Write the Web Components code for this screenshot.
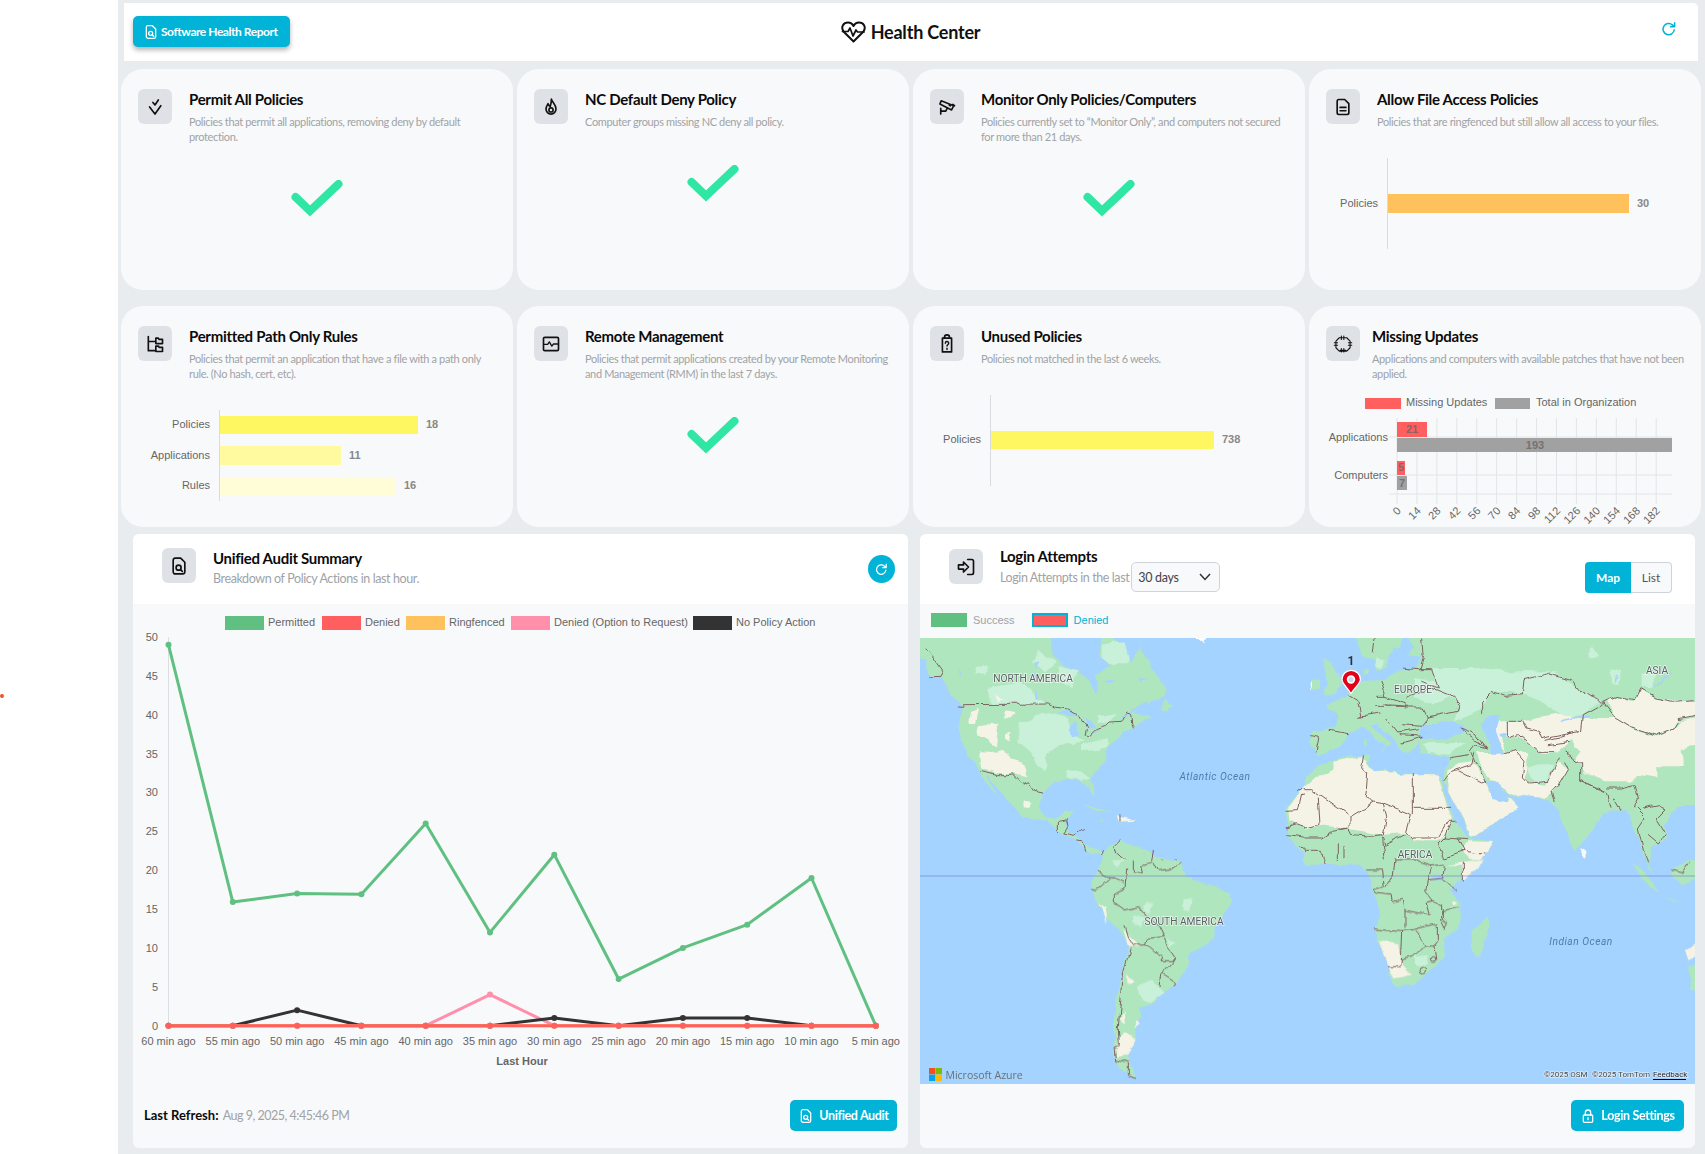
<!DOCTYPE html>
<html lang="en">
<head>
<meta charset="utf-8">
<title>Health Center</title>
<style>
  html, body { margin: 0; padding: 0; background: #fff; }
  body { font-family: "Lato", "Liberation Sans", sans-serif; }
  health-page { --ui: "Lato", "Liberation Sans", sans-serif; --chart: "Liberation Sans", Arial, sans-serif; --cyan: #00b3d7; }
</style>
</head>
<body>
<health-page>
  <top-bar></top-bar>
  <div slot="cards" style="display:contents">
    <status-card slot="cards" heading="Permit All Policies" desc="Policies that permit all applications, removing deny by default protection." icon="checks"><check-mark></check-mark></status-card>
    <status-card slot="cards" heading="NC Default Deny Policy" desc="Computer groups missing NC deny all policy." icon="flame"><check-mark></check-mark></status-card>
    <status-card slot="cards" heading="Monitor Only Policies/Computers" desc="Policies currently set to “Monitor Only”, and computers not secured for more than 21 days." icon="cctv"><check-mark></check-mark></status-card>
    <status-card slot="cards" heading="Allow File Access Policies" desc="Policies that are ringfenced but still allow all access to your files." icon="file"><hbar-chart axis="79" rows='[["Policies",241,36,19,"#ffc15c","30"]]'></hbar-chart></status-card>
    <status-card slot="cards" heading="Permitted Path Only Rules" desc="Policies that permit an application that have a file with a path only rule. (No hash, cert, etc)." icon="tree"><hbar-chart axis="99" rows='[["Policies",198,6,18,"#fff761","18"],["Applications",121,36,19,"#fffaa0","11"],["Rules",176,67,18,"#fffcd8","16"]]'></hbar-chart></status-card>
    <status-card slot="cards" heading="Remote Management" desc="Policies that permit applications created by your Remote Monitoring and Management (RMM) in the last 7 days." icon="monitor"><check-mark></check-mark></status-card>
    <status-card slot="cards" heading="Unused Policies" desc="Policies not matched in the last 6 weeks." icon="clipboard"><hbar-chart axis="78" rows='[["Policies",223,36,18,"#fff761","738"]]'></hbar-chart></status-card>
    <status-card slot="cards" heading="Missing Updates" desc="Applications and computers with available patches that have not been applied." icon="patch" gap="12"><updates-chart></updates-chart></status-card>
  </div>
  <panel-box slot="panels" heading="Unified Audit Summary" icon="filesearch">
    <span slot="sub">Breakdown of Policy Actions in last hour.</span>
    <round-refresh slot="action"></round-refresh>
    <audit-chart></audit-chart>
    <refresh-note slot="foot-left"></refresh-note>
    <cta-button slot="foot-right" icon="filesearch" width="107">Unified Audit</cta-button>
  </panel-box>
  <panel-box slot="panels" heading="Login Attempts" icon="login" tight>
    <span slot="sub">Login Attempts in the last</span>
    <days-select slot="sub"></days-select>
    <map-toggle slot="action"></map-toggle>
    <login-legend></login-legend>
    <world-map></world-map>
    <cta-button slot="foot-right" icon="lock" width="113">Login Settings</cta-button>
  </panel-box>
</health-page>

<script>
const ICONS = {
  checks: '<path d="M9.5 6.5l2.500 3 4-6M5.500 12l6.500 8.500 7-10"/>',
  flame: '<path d="M12.500 2.500c.5 3.500 5.500 6 5.500 12a6 6 0 0 1-12 0c0-3 1.500-4.500 2.500-6.500.5 1.500 1 2.500 2.500 3.500 1-2.500 1.500-5.500 1.500-9z"/><circle cx="12" cy="15.500" r="2.500"/>',
  cctv: '<path d="M5 4.500l15 6-2.500 5-14-7zM12.500 13l-2 4H5.500M4.500 13.500v7M19 9l2 1.500M14.500 9.500l1.500 1"/>',
  file: '<path d="M7 3h7l5 5v11a2 2 0 0 1-2 2H7a2 2 0 0 1-2-2V5a2 2 0 0 1 2-2zM8.500 12.500h7M8.500 16.500h7"/>',
  tree: '<path d="M4 3v17h8M4 9h8M13 5h3l1 1.500h4v5h-8zM13 14.500h3l1 1.500h4v5h-8z"/>',
  monitor: '<rect x="3" y="4" width="18" height="16" rx="1.500"/><path d="M4 12.500h4l2-3 3 5 2-2.500h5" stroke-width="1.600"/>',
  clipboard: '<path d="M9 5h6v-1a3 3 0 0 0-6 0zM9 5H6.500v16.500h11V5H15"/><path d="M10 11a2 2 0 1 1 3 1.700c-.8.5-1 1-1 1.800M12 17v1.500" stroke-width="1.700"/>',
  patch: '<path d="M7.500 4.500h9l4 4v8l-4 4h-9l-4-4v-8zM10 2.500v4M13 2.500v4M15.500 4.500h-7M10 17.500v4M13 17.500v4M15.500 19.500h-7M1.500 10.500h4M1.500 13.500h4M3.500 9v6M18.500 10.500h4M18.500 13.500h4M20.500 9v6" stroke-width="1.300"/>',
  filesearch: '<path d="M7 2.500h7l5 5V19a2.500 2.500 0 0 1-2.500 2.500h-9A2.500 2.500 0 0 1 5 19V5a2.500 2.500 0 0 1 2-2.500z"/><circle cx="11.500" cy="14" r="3"/><path d="M13.800 16.300l2.200 2.200"/>',
  login: '<path d="M14 3h5a2 2 0 0 1 2 2v14a2 2 0 0 1-2 2h-5"/><path d="M3 9.500h6V6l6 6-6 6v-3.500H3z"/>',
  lock: '<rect x="5" y="10.500" width="14" height="11" rx="1.500"/><path d="M8 10.500V7a4 4 0 0 1 8 0v3.500M12 14.500v3"/>',
  refresh: '<path d="M19 13a7.500 7.500 0 1 1-2.500-6.500L19 9M19.500 3.500V9H14"/>'
};
const svgIcon = (name, size, stroke) =>
  `<svg width="${size}" height="${size}" viewBox="0 0 24 24" fill="none" stroke="${stroke}" stroke-width="2" stroke-linecap="round" stroke-linejoin="round" style="display:block;flex:none">${ICONS[name]}</svg>`;

class HealthPage extends HTMLElement {
  constructor() {
    super();
    this.attachShadow({ mode: "open" }).innerHTML = `
      <style>
        :host { display: grid; grid-template-columns: 118px 1fr; height: 1154px; overflow: hidden; font-family: var(--ui); }
        .side { background: #fff; padding-top: 694px; }
        .dot { width: 4px; height: 4px; border-radius: 50%; background: #f0532a; }
        main { background: #e9ecef; padding-top: 3px; min-width: 0; }
        .cards { display: grid; grid-template-columns: repeat(4, 392px); gap: 16px 4px; margin: 8px 0 0 3px; }
        .panels { display: grid; grid-template-columns: 775px 775px; gap: 12px; margin: 7px 0 0 15px; }
        ::slotted(top-bar) { margin: 0 7px 0 6px; }
      </style>
      <div class="side"><div class="dot"></div></div>
      <main>
        <slot></slot>
        <div class="cards"><slot name="cards"></slot></div>
        <div class="panels"><slot name="panels"></slot></div>
      </main>`;
  }
}

class TopBar extends HTMLElement {
  constructor() {
    super();
    this.attachShadow({ mode: "open" }).innerHTML = `
      <style>
        :host { display: grid; grid-template-columns: 1fr auto 1fr; align-items: center; height: 58px; background: #fff; border-radius: 0 5px 0 0; padding: 0 20px 0 9px; font-family: var(--ui); }
        .report { display: inline-flex; align-items: center; gap: 2px; justify-self: start; height: 31px; width: 157px; box-sizing: border-box; padding-left: 10px; background: var(--cyan); color: #fff; border-radius: 5px; font-size: 12px; font-weight: 700; letter-spacing: -.45px; box-shadow: 0 3px 5px rgba(0,0,0,.3); margin-top: -1px; }
        h1 { display: flex; align-items: center; gap: 5px; margin: 0 0 0 10px; font-size: 18px; font-weight: 700; letter-spacing: -.2px; color: #111; }
        .re { justify-self: end; margin-top: -7px; }
      </style>
      <div class="report">${svgIcon("filesearch", 16, "#fff")}Software Health Report</div>
      <h1><svg width="25" height="22" viewBox="0 0 25 22" fill="none" stroke="#111" stroke-width="2" stroke-linejoin="round" stroke-linecap="round"><path d="M12.500 20.500L2.500 10.500C-.5 6 2.500 1.500 7 1.500c2.500 0 4.500 1.500 5.500 3.500 1-2 3-3.500 5.500-3.500 4.500 0 7.500 4.500 4.500 9z"/><path d="M1.500 10.500H7l2-3.500 3 8 3-6 1.500 2H23" stroke-width="1.700"/></svg>Health Center</h1>
      <div class="re">${svgIcon("refresh", 18, "#00b3d7")}</div>`;
  }
}

class StatusCard extends HTMLElement {
  constructor() {
    super();
    const gap = this.getAttribute("gap") || 17;
    this.attachShadow({ mode: "open" }).innerHTML = `
      <style>
        :host { display: block; height: 221px; background: #f8f9fa; border-radius: 22px; overflow: hidden; font-family: var(--ui); }
        .head { display: flex; gap: ${gap}px; padding: 20px 14px 0 17px; min-height: 40px; }
        .tile { flex: none; width: 34px; height: 35px; border-radius: 6px; background: #dee2e6; display: flex; align-items: center; justify-content: center; }
        h3 { margin: 0; font-size: 15px; line-height: 20px; font-weight: 700; letter-spacing: -.3px; color: #0b0b0b; }
        p { margin: 5px 0 0; font-size: 11px; line-height: 15px; letter-spacing: -.36px; color: #a0a3a6; }
      </style>
      <div class="head">
        <div class="tile">${svgIcon(this.getAttribute("icon"), 20, "#111")}</div>
        <div><h3>${this.getAttribute("heading")}</h3><p>${this.getAttribute("desc")}</p></div>
      </div>
      <slot></slot>`;
  }
}

class CheckMark extends HTMLElement {
  constructor() {
    super();
    this.attachShadow({ mode: "open" }).innerHTML = `
      <style>:host { display: flex; justify-content: center; margin-top: 36px; }</style>
      <svg width="52" height="37" viewBox="0 0 52 37" fill="none" stroke="#2fe6a5" stroke-width="8" stroke-linecap="round" stroke-linejoin="miter"><path d="M4.500 17L19 31 47.500 4"/></svg>`;
  }
}

class HbarChart extends HTMLElement {
  constructor() {
    super();
    const ax = +this.getAttribute("axis");
    const rows = JSON.parse(this.getAttribute("rows"));
    const bars = rows.map(([label, w, y, h, color, val]) => `
      <text x="${ax - 10}" y="${y + h / 2 + 3}" text-anchor="end" fill="#666">${label}</text>
      <rect x="${ax}" y="${y}" width="${w}" height="${h}" fill="${color}"/>
      <text x="${ax + w + 8}" y="${y + h / 2 + 3}" fill="#888" font-weight="700">${val}</text>`).join("");
    this.attachShadow({ mode: "open" }).innerHTML = `
      <style>:host { display: block; margin-top: 29px; } svg { display: block; font: 11px var(--chart); }</style>
      <svg width="392" height="100"><line x1="${ax - .5}" x2="${ax - .5}" y1="0" y2="91" stroke="#d9dcdf"/>${bars}</svg>`;
  }
}

class UpdatesChart extends HTMLElement {
  constructor() {
    super();
    const x0 = 88, unit = 1.424, y = v => v - 381;
    let grid = "", ticks = "";
    for (let v = 0; v <= 182; v += 14) {
      const x = x0 + v * unit;
      grid += `<line x1="${x}" x2="${x}" y1="${y(418)}" y2="${y(504)}" stroke="#e2e4e7"/>`;
      ticks += `<text transform="translate(${x + 1} ${y(508)}) rotate(-45)" text-anchor="end" dy="5" fill="#666">${v}</text>`;
    }
    const hl = [437, 475, 494].map(v => `<line x1="${x0 - 8}" x2="363" y1="${y(v)}" y2="${y(v)}" stroke="#e2e4e7"/>`).join("");
    this.attachShadow({ mode: "open" }).innerHTML = `
      <style>:host { display: block; } svg { display: block; font: 11px var(--chart); }</style>
      <svg width="392" height="146">
        <rect x="56" y="17" width="36" height="11" fill="#ff5f5f"/><text x="97" y="25" fill="#666">Missing Updates</text>
        <rect x="186" y="17" width="35" height="11" fill="#a1a1a1"/><text x="227" y="25" fill="#666">Total in Organization</text>
        ${grid}${hl}
        <rect x="${x0}" y="${y(422)}" width="30" height="15" fill="#ff5f5f"/>
        <rect x="${x0}" y="${y(438)}" width="275" height="14" fill="#a1a1a1"/>
        <rect x="${x0}" y="${y(461)}" width="8" height="14" fill="#ff5f5f"/>
        <rect x="${x0}" y="${y(476)}" width="10" height="14" fill="#a1a1a1"/>
        <g fill="#666" font-weight="700" fill-opacity=".8" text-anchor="middle">
          <text x="103" y="${y(433)}">21</text><text x="226" y="${y(449)}">193</text><text x="92" y="${y(471)}">5</text><text x="93" y="${y(487)}">7</text>
        </g>
        <text x="79" y="${y(440.5)}" text-anchor="end" fill="#666">Applications</text>
        <text x="79" y="${y(478.5)}" text-anchor="end" fill="#666">Computers</text>
        ${ticks}
      </svg>`;
  }
}

class PanelBox extends HTMLElement {
  constructor() {
    super();
    const tight = this.hasAttribute("tight");
    this.attachShadow({ mode: "open" }).innerHTML = `
      <style>
        :host { display: flex; flex-direction: column; height: 614px; background: #f8f9fa; border-radius: 6px; overflow: hidden; font-family: var(--ui); }
        header { flex: none; display: flex; align-items: flex-start; height: 70px; box-sizing: border-box; background: #fff; padding: ${tight ? "15px 23px 0 29px" : "14px 13px 0 29px"}; }
        .tile { flex: none; width: 34px; height: 35px; border-radius: 6px; background: #dee2e6; display: flex; align-items: center; justify-content: center; }
        .txt { flex: 1; margin-left: 17px; margin-top: ${tight ? "-3px" : "0"}; }
        h3 { margin: 0; font-size: 15px; line-height: 20px; font-weight: 700; letter-spacing: -.3px; color: #0b0b0b; }
        .sub { display: flex; align-items: center; font-size: 12.5px; letter-spacing: -.4px; color: #a0a3a6; margin-top: ${tight ? "-4px" : "3px"}; min-height: ${tight ? "30px" : "0"}; gap: 2px; }
        .body { flex: 1; min-height: 0; }
        footer { flex: none; height: 64px; box-sizing: border-box; padding: 16px 11px 0; display: flex; justify-content: space-between; align-items: flex-start; }
      </style>
      <header>
        <div class="tile">${svgIcon(this.getAttribute("icon"), 20, "#111")}</div>
        <div class="txt"><h3>${this.getAttribute("heading")}</h3><div class="sub"><slot name="sub"></slot></div></div>
        <slot name="action"></slot>
      </header>
      <div class="body"><slot></slot></div>
      <footer><div><slot name="foot-left"></slot></div><slot name="foot-right"></slot></footer>`;
  }
}

class RoundRefresh extends HTMLElement {
  constructor() {
    super();
    this.attachShadow({ mode: "open" }).innerHTML = `
      <style>:host { display: flex; align-items: center; justify-content: center; width: 27px; height: 28px; border-radius: 50%; background: var(--cyan); margin-top: 7px; }</style>
      ${svgIcon("refresh", 15, "#fff")}`;
  }
}

class RefreshNote extends HTMLElement {
  constructor() {
    super();
    this.attachShadow({ mode: "open" }).innerHTML = `
      <style>
        :host { display: block; line-height: 31px; font-size: 12.5px; color: #a0a3a6; font-family: var(--ui); letter-spacing: -.5px; }
        b { color: #0b0b0b; font-size: 13px; letter-spacing: 0; margin-right: 2px; }
      </style>
      <b>Last Refresh:</b> Aug 9, 2025, 4:45:46 PM`;
  }
}

class CtaButton extends HTMLElement {
  constructor() {
    super();
    this.attachShadow({ mode: "open" }).innerHTML = `
      <style>
        :host { display: flex; align-items: center; justify-content: center; gap: 5px; box-sizing: border-box; width: ${this.getAttribute("width")}px; height: 31px; border-radius: 5px; background: var(--cyan); color: #fff; font: 700 12.5px var(--ui); letter-spacing: -.35px; }
      </style>
      ${svgIcon(this.getAttribute("icon"), 16, "#fff")}<slot></slot>`;
  }
}

class DaysSelect extends HTMLElement {
  constructor() {
    super();
    this.attachShadow({ mode: "open" }).innerHTML = `
      <style>
        :host { display: flex; align-items: center; justify-content: space-between; box-sizing: border-box; width: 89px; height: 30px; padding: 0 8px 0 6px; background: #f8f9fa; border: 1px solid #ced4da; border-radius: 5px; color: #444; font-size: 12.5px; letter-spacing: -.3px; }
      </style>
      <span>30 days</span>
      <svg width="12" height="8" viewBox="0 0 12 8" fill="none" stroke="#333" stroke-width="1.5"><path d="M1 1l5 5.500L11 1"/></svg>`;
  }
}

class MapToggle extends HTMLElement {
  constructor() {
    super();
    this.attachShadow({ mode: "open" }).innerHTML = `
      <style>
        :host { display: flex; height: 31px; margin-top: 13px; font: 700 12px var(--ui); }
        div { display: flex; align-items: center; justify-content: center; box-sizing: border-box; }
        .on { width: 46px; background: var(--cyan); color: #fff; border-radius: 4px 0 0 4px; }
        .off { width: 41px; background: #f8f9fa; color: #555; border: 1px solid #ced4da; border-left: 0; border-radius: 0 4px 4px 0; font-weight: 400; }
      </style>
      <div class="on">Map</div><div class="off">List</div>`;
  }
}

class LoginLegend extends HTMLElement {
  constructor() {
    super();
    this.attachShadow({ mode: "open" }).innerHTML = `
      <style>
        :host { display: flex; align-items: center; height: 34px; padding: 0 0 3px 11px; box-sizing: border-box; font: 11px var(--chart); color: #a0a3a6; }
        i { display: block; width: 36px; height: 14px; box-sizing: border-box; margin-right: 6px; }
        .g { background: #5fc082; }
        .r { background: #ff5f5f; border: 2px solid var(--cyan); margin-left: 17px; }
        .d { color: var(--cyan); }
      </style>
      <i class="g"></i><span>Success</span><i class="r"></i><span class="d">Denied</span>`;
  }
}

class AuditChart extends HTMLElement {
  constructor() {
    super();
    const X = i => 35.5 + 64.3 * i, Y = v => 421.7 - 7.774 * v;
    const series = [
      ["#5fc082", [49, 15.9, 17, 16.9, 26, 12, 22, 6, 10, 13, 19, 0]],
      ["#ff8fab", [0, 0, 0, 0, 0, 4, 0, 0, 0, 0, 0, 0]],
      ["#333333", [0, 0, 2, 0, 0, 0, 1, 0, 1, 1, 0, 0]],
      ["#ffc15c", [0, 0, 0, 0, 0, 0, 0, 0, 0, 0, 0, 0]],
      ["#ff5f5f", [0, 0, 0, 0, 0, 0, 0, 0, 0, 0, 0, 0]]
    ];
    const lines = series.map(([c, d]) => {
      const pts = d.map((v, i) => `${X(i)},${Y(v)}`).join(" ");
      const dots = d.map((v, i) => `<circle cx="${X(i)}" cy="${Y(v)}" r="3" fill="${c}"/>`).join("");
      return `<polyline points="${pts}" fill="none" stroke="${c}" stroke-width="3" stroke-linejoin="round"/>${dots}`;
    }).join("");
    let yl = "", xl = "";
    for (let v = 0; v <= 50; v += 5) yl += `<text x="25" y="${Y(v) + 4}" text-anchor="end">${v}</text>`;
    for (let i = 0; i < 12; i++) xl += `<text x="${X(i)}" y="441" text-anchor="middle">${60 - i * 5} min ago</text>`;
    const legend = [[92, "#5fc082", "Permitted"], [189, "#ff5f5f", "Denied"], [273, "#ffc15c", "Ringfenced"], [378, "#ff8fab", "Denied (Option to Request)"], [560, "#333", "No Policy Action"]]
      .map(([x, c, t]) => `<rect x="${x}" y="12" width="39" height="14" fill="${c}"/><text x="${x + 43}" y="22">${t}</text>`).join("");
    this.attachShadow({ mode: "open" }).innerHTML = `
      <style>:host { display: block; } svg { display: block; font: 11px var(--chart); fill: #666; }</style>
      <svg width="775" height="480">
        ${legend}
        <line x1="35.5" x2="35.5" y1="33" y2="422" stroke="#dcdfe2"/>
        ${yl}${xl}${lines}
        <text x="389" y="461" text-anchor="middle" font-weight="700">Last Hour</text>
      </svg>`;
  }
}

class WorldMap extends HTMLElement {
  constructor() {
    super();
    this.attachShadow({ mode: "open" }).innerHTML = `
      <style>
        :host { display: block; height: 446px; background: #a5d3ff; }
        svg { display: block; }
        .land { fill: #b0e6bd; }
        .pale { fill: #c9f0d8; }
        .dry { fill: #f5f2e6; }
        .sea { fill: #a5d3ff; }
        .riv { fill: none; stroke: #a5d3ff; stroke-width: 5; stroke-linecap: round; }
        .ln { fill: none; stroke: #7d6062; stroke-width: 3; stroke-linejoin: round; stroke-linecap: round; }
        .lab { font: 10.2px Roboto, sans-serif; fill: #5c5c66; stroke: #fff; stroke-width: 1.5px; paint-order: stroke; stroke-opacity: .7; text-anchor: middle; }
        .oc { font: italic 10.2px Roboto, sans-serif; fill: #4f7cae; text-anchor: middle; letter-spacing: .5px; }
        .att { font: 8px Roboto, sans-serif; fill: #444; stroke: #fff; stroke-width: 1.5px; paint-order: stroke; stroke-opacity: .6; }
      </style>
      <svg width="775" height="446" viewBox="0 0 775 446">
        <defs>
          <filter id="rough" filterUnits="userSpaceOnUse" x="0" y="0" width="775" height="446" color-interpolation-filters="sRGB">
            <feTurbulence type="fractalNoise" baseFrequency=".06" numOctaves="3" seed="7" result="n"/>
            <feDisplacementMap in="SourceGraphic" in2="n" scale="7" xChannelSelector="R" yChannelSelector="G"/>
          </filter>
        </defs>
        <g filter="url(#rough)">
        <!-- north america, atlantic -->
        <g transform="scale(.33333)">
          <path class="land" d="M-20 -20L390 -20L400 60L440 85L490 120L510 130L525 172L535 130L530 110L570 85L540 50L545 -20L590 8L630 70L660 30L690 70L700 100L740 150L735 172L700 190L660 200L640 225L690 232L700 238L660 255L640 270L605 295L565 320L560 365L505 415L520 450L518 478L498 440L480 425L400 435L365 470L360 505L375 540L405 545L430 520L462 515L435 555L445 575L470 600L495 620L540 640L555 635L545 652L500 640L470 612L410 570L380 548L310 540L290 520L232 450L205 410L235 480L248 495L200 430L170 385L140 345L122 300L118 255L125 205L90 175L75 135L62 115L32 115L20 70L-20 45Z"/>
          <path class="land" d="M720 215L735 175L745 195L762 205L740 218ZM490 500L520 503L575 528L530 515ZM540 545L552 545L548 549Z"/>
          <path class="land" d="M545 680L550 650L565 620L600 605L640 625L700 650L780 680Z"/>
          <path class="land" d="M1175 405L1150 445L1130 470L1100 510L1095 520L1105 560L1100 595L1140 635L1175 655Z"/>
          <path class="pale" d="M295 310L300 255L385 222L440 240L470 295L490 315L420 320L385 345L370 400L345 375L330 340ZM205 150L300 130L345 170L380 198L215 198ZM165 90L210 85L195 110L160 110ZM360 35L410 75L380 100L330 75ZM420 85L470 100L460 150L410 130ZM545 20L610 10L625 70L580 85L545 60ZM440 395L495 405L510 415L490 425L440 425ZM480 325L560 300L565 320L540 335L480 340ZM530 235L590 225L570 250L530 255Z"/>
          <path class="dry" d="M175 265L200 262L215 248L235 255L228 325L212 318L205 300L172 300ZM178 342L215 345L245 335L280 365L310 375L325 415L280 405L225 405L180 388ZM150 225L175 215L165 255L145 255ZM225 165L250 185L235 190ZM255 220L290 225L270 245L250 240ZM258 290L275 288L270 310L258 305ZM590 532L630 540L650 545L595 548ZM1175 415L1150 448L1105 510L1108 550L1140 565L1175 560Z"/>
          <circle class="dry" cx="322" cy="495" r="9"/>
          <path class="sea" d="M415 228L440 214L480 236L450 232ZM470 245L478 290L455 295L452 265ZM498 238L530 268L500 268ZM500 292L540 270L530 282ZM345 150L360 185L350 185ZM340 75L355 70L345 95ZM335 100L355 105L345 115ZM545 125L590 125L570 135ZM655 120L680 122L660 130ZM115 90L125 105L120 110Z"/>
          <path class="riv" d="M205 412L225 445L248 488M608 236L682 190"/>
          <path d="M825 0L856 0L850 16L838 6ZM1165 140L1170 135L1170 160Z" fill="#fff"/>
          <path class="ln" d="M112 207L128 208L130 200L385 198L400 207L440 212L480 235L500 265L495 292L510 292L530 272L560 262L570 252L605 250L620 222L632 225L635 255L640 270M15 30L40 60L68 100L60 115L32 116M185 398L230 410L265 410L280 408L310 437L325 428L350 465L368 468M415 578L415 550L440 545L445 570L435 585L460 592L490 575M470 612L490 615L497 640M545 650L550 635M620 672L590 645L585 620L600 605M700 640L695 665M725 665L735 672M760 662L770 675M600 530L600 548"/>
          <path class="ln" d="M1135 452L1170 452" stroke-dasharray="10 7"/>
          <path class="ln" d="M1098 517L1135 515L1145 470L1170 465M1100 570L1130 560L1170 575M1100 590L1170 600M1135 620L1170 650"/>
        </g>
        <!-- eurasia, north africa -->
        <g transform="translate(385 0) scale(.33333)">
          <path class="land" d="M0 415L25 395L45 378L85 365L135 352L170 350L195 350L190 375L205 398L270 395L285 410L330 412L395 410L405 420L420 480L445 545L490 600L565 612L530 665L510 680L0 680Z"/>
          <path class="dry" d="M0 445L30 420L85 395L85 368L170 352L190 378L205 400L270 397L285 412L395 412L415 480L440 550L430 585L400 610L325 610L305 585L235 590L130 572L50 562L0 575ZM490 610L565 612L530 665L510 678L470 640Z"/>
          <path class="land" d="M130 175L65 200L100 228L95 272L20 280L15 330L40 355L95 330L132 285L170 265L215 258L270 310L290 342L315 345L340 310L345 345L400 352L428 358L415 430L430 460L480 560L495 598L560 565L640 505L612 470L605 490L565 480L545 432L560 430L612 465L635 475L700 478L730 490L760 512L780 570L808 640L832 618L880 545L915 510L960 520L985 560L1002 600L1012 650L1030 680L1045 620L1085 605L1075 560L1115 510L1175 495L1175 -20L355 -20L350 60L335 90L295 95L235 125L170 130Z"/>
          <path class="land" d="M165 250L195 252L260 320L240 330L230 345L240 320L195 280ZM178 305L186 305L184 325L177 325ZM150 -20L300 -20L282 30L252 50L245 85L215 100L205 60L165 55ZM300 -20L355 -20L350 60L310 50L325 30ZM55 60L80 75L110 140L90 165L55 172L70 130ZM15 130L45 125L45 155L15 160ZM178 92L192 92L188 112L176 110Z"/>
          <path class="pale" d="M380 90L520 90L620 100L750 100L830 160L890 190L830 230L780 240L720 200L660 170L560 160L520 220L450 250L465 200L420 170L390 130ZM860 25L880 55L850 60ZM920 100L945 95L940 140L920 140ZM330 120L390 130L430 175L380 200L330 180ZM350 315L480 315L430 350L370 345ZM215 55L240 70L225 95L210 85ZM1010 110L1060 100L1040 150L1010 150Z"/>
          <path class="dry" d="M905 190L945 178L985 190L1005 160L1050 182L1175 190L1175 232L1120 250L1105 272L1055 293L985 270L930 240ZM800 270L840 240L930 240L985 275L1055 298L1105 275L1130 250L1175 240L1175 320L1130 340L1135 385L1060 385L1060 420L1000 410L980 430L900 430L840 405L815 360L830 340L805 330ZM565 250L610 250L650 250L700 240L760 230L830 240L835 280L790 310L760 340L720 345L700 340L640 295L610 300L590 290L600 345L570 290ZM590 345L630 335L670 350L670 390L660 430L720 440L760 370L790 395L760 445L735 465L725 480L635 472L612 462L560 428L530 395L520 345ZM430 395L460 375L500 370L540 430L565 480L605 490L612 475L640 505L560 565L495 595L480 555L430 460Z"/>
          <path class="pale" d="M670 385L745 380L720 435L680 428Z"/>
          <path d="M830 630L845 640L840 658L828 650Z" fill="#fbfbf4"/>
          <path class="sea" d="M355 255L400 255L445 250L490 275L465 290L395 305L350 300L345 275ZM540 240L585 230L570 280L595 350L560 350L545 300L530 260ZM580 285L610 290L600 298L582 295ZM265 30L310 55L330 85L295 92L255 80Z"/>
          <path class="riv" d="M770 250L800 240L850 235M1050 145L1100 105M935 115L930 135"/>
          <path class="ln" d="M0 455L20 455L135 535L135 572L100 570M135 535L205 492L235 497L245 535L235 590M235 495L320 530L305 580L320 600M40 480L45 560L0 570M175 350L170 390L185 410L180 465L205 492M325 410L325 530M320 600L350 600L400 600L430 550L450 550M0 600L50 600L80 580L130 570L140 590L200 595L230 590L240 620L300 590M0 640L50 640L60 680M100 620L100 665M120 625L120 660M230 600L240 680M420 600L490 605M440 550L420 600L400 620L420 660L480 640L460 600M415 430L440 400L500 380L510 345M455 395L530 435L545 430M490 350L430 360M500 345L515 380L545 435M495 340L510 320L545 330L505 300L470 275M595 345L630 335L660 370L655 420L670 435L730 430L760 360M610 250L610 300L640 290L700 340L750 340M610 250L650 250L660 270L700 280L710 305L750 295L830 280M655 170L660 125L735 105L800 125L830 165L880 185L895 200M655 170L600 175L560 160L530 190L530 225M830 280L835 230L890 200M895 195L940 175L990 185L1005 155L1050 180L1100 190L1170 185M895 195L930 240L980 270L1055 295L1110 270L1125 245L1170 235M720 310L760 300L800 285M730 320L790 310M780 340L830 380L830 430L900 460M780 370L790 395L760 445L735 460L745 490M830 425L870 450L905 465M905 450L950 450L990 440L1000 480L985 510M905 465L915 505M925 480L945 515M990 510L1020 540L1000 570L1015 640L1030 675M1015 510L1060 500L1080 510L1050 540L1080 590L1060 615L1030 590M130 175L155 190L165 235M155 235L225 225M225 130L240 175L215 175M240 175L305 195M240 200L310 205M215 205L310 205M305 180L380 150L430 170L465 200L460 220L370 240M300 210L355 210L370 240L350 265L290 260M295 90L340 95L380 95L400 150L350 130M350 0L355 60L345 95M240 240L275 285L340 275M285 290L355 295L290 315M210 0L205 45M20 290L40 295L30 345M75 280L130 290M465 270L510 285L545 330"/>
          <path class="ln" d="M330 508L437 508" stroke="#5a3c3c"/>
          <path class="ln" d="M470 640L540 645" stroke-dasharray="10 7"/>
        </g>
        <!-- south america -->
        <g transform="translate(0 222) scale(.33333)">
          <path class="land" d="M550 0L535 30L515 80L525 115L555 170L600 215L625 260L610 330L590 420L580 480L590 540L580 580L600 620L625 645L650 650L630 620L620 590L650 540L640 510L665 470L660 440L700 430L735 395L770 370L810 310L810 280L880 235L900 180L935 120L925 95L850 70L800 50L780 10L770 0Z"/>
          <path class="pale" d="M650 380L700 360L735 400L690 430L660 410ZM640 170L670 165L660 195L640 190ZM680 125L700 130L690 160L672 150ZM790 120L812 115L808 150L790 148ZM740 235L770 245L750 260ZM580 0L620 0L590 20Z"/>
          <path class="dry" d="M535 125L555 150L560 190ZM610 215L640 240L660 260L625 265ZM610 510L650 540L620 590L590 590L595 540ZM650 480L660 490L640 505ZM610 450L615 490L600 480ZM625 340L645 365L625 370Z"/>
          <path class="ln" d="M535 35L565 50L610 70M620 30L615 85L580 100L580 125L615 150L660 140L690 175L715 200L730 230L685 235L680 255L650 255L640 260L625 235L615 200M680 255L725 295L720 305L755 305L765 290L745 260L725 230M765 295L755 310L725 345L720 380M730 340L770 365L765 375M630 270L610 340L605 400L600 440L595 500L598 560L585 565L590 600L625 610L625 645L650 652M515 85L530 90L570 55M640 0L640 40L670 35L665 15L700 5L715 35L750 30L780 10"/>
        </g>
        <!-- southern africa, indian ocean -->
        <g transform="translate(385 222) scale(.33333)">
          <path class="land" d="M0 0L150 0L185 35L200 85L210 100L220 130L225 170L205 205L230 260L250 320L270 380L330 375L390 320L420 280L415 240L465 190L470 130L450 110L430 90L470 60L540 0Z"/>
          <path class="land" d="M550 165L555 190L530 280L510 288L497 260L505 205ZM975 0L1020 40L1065 95L1030 80ZM1065 105L1145 125L1100 118ZM1100 30L1150 0L1175 0L1175 55L1130 80L1100 50ZM1020 0L1045 35L1035 30ZM1175 315L1150 320L1155 385L1175 390Z"/>
          <path class="dry" d="M225 240L280 250L285 300L292 320L320 345L268 352L250 320ZM420 15L540 0L475 60L470 20ZM1175 245L1140 270L1150 300L1175 290ZM440 120L460 130L445 138Z"/>
          <path class="pale" d="M330 290L370 285L370 315L330 320Z"/>
          <path class="sea" d="M385 60L410 60L412 45L385 45Z"/>
          <path class="ln" d="M185 30L230 30L235 85L205 85L215 100L255 105L260 122L295 115L300 150L350 160L370 170L360 130L385 125L410 135L410 175L425 205M300 150L300 205M205 207L290 215L320 212L345 205L400 195L400 240L390 255M290 215L285 320L250 320M330 215L365 255L390 255L395 300M360 255L325 290L285 300M415 145L415 175L430 190L420 205M415 155L465 145M270 0L265 40L240 80M270 0L330 0L380 15L415 10M380 15L370 60L410 55L415 15M410 60L455 90M370 60L365 100L385 125M475 10L475 60M1100 30L1130 38L1150 10"/>
          <circle class="ln" cx="386" cy="300" r="7"/>
          <circle class="ln" cx="355" cy="332" r="10"/>
        </g>
        </g>
        <line x1="0" x2="775" y1="238" y2="238" stroke="#6a78c8" stroke-opacity=".4" stroke-width="1.5"/>
        <text class="lab" x="113" y="44">NORTH AMERICA</text>
        <text class="lab" x="493" y="55">EUROPE</text>
        <text class="lab" x="737" y="35.5">ASIA</text>
        <text class="lab" x="495" y="219.5">AFRICA</text>
        <text class="lab" x="264" y="286.5">SOUTH AMERICA</text>
        <text class="oc" x="295" y="141.5">Atlantic Ocean</text>
        <text class="oc" x="661" y="306.5">Indian Ocean</text>
        <text x="431" y="27" text-anchor="middle" style="font:700 12px Roboto,sans-serif;fill:#333">1</text>
        <path d="M431 55.5C427 49 422 45.5 422 41.5a9.200 9.200 0 0 1 18.400 0C440.400 45.500 435 49 431 55.500z" fill="#e2001a" stroke="#fff" stroke-width="1.200"/>
        <circle cx="431" cy="41.5" r="4.200" fill="#fff"/><circle cx="431" cy="41.5" r="2.600" fill="#cfd9e2"/>
        <rect x="9" y="430" width="6.3" height="6.3" fill="#f25022"/><rect x="15.700" y="430" width="6.3" height="6.3" fill="#7fba00"/>
        <rect x="9" y="436.7" width="6.3" height="6.3" fill="#00a4ef"/><rect x="15.700" y="436.7" width="6.3" height="6.3" fill="#ffb900"/>
        <text x="25.5" y="440.5" style="font:10.5px 'Open Sans',sans-serif;fill:#6b6f73">Microsoft Azure</text>
        <text class="att" x="624" y="439">©2025 OSM</text>
        <text class="att" x="672" y="439">©2025 TomTom</text>
        <text class="att" x="733" y="439" style="fill:#222">Feedback</text>
        <line x1="733" x2="766" y1="441.5" y2="441.5" stroke="#000" stroke-width="1.2"/>
      </svg>`;
  }
}

customElements.define("health-page", HealthPage);
customElements.define("top-bar", TopBar);
customElements.define("status-card", StatusCard);
customElements.define("check-mark", CheckMark);
customElements.define("hbar-chart", HbarChart);
customElements.define("updates-chart", UpdatesChart);
customElements.define("panel-box", PanelBox);
customElements.define("round-refresh", RoundRefresh);
customElements.define("refresh-note", RefreshNote);
customElements.define("cta-button", CtaButton);
customElements.define("days-select", DaysSelect);
customElements.define("map-toggle", MapToggle);
customElements.define("login-legend", LoginLegend);
customElements.define("audit-chart", AuditChart);
customElements.define("world-map", WorldMap);
</script>
</body>
</html>
